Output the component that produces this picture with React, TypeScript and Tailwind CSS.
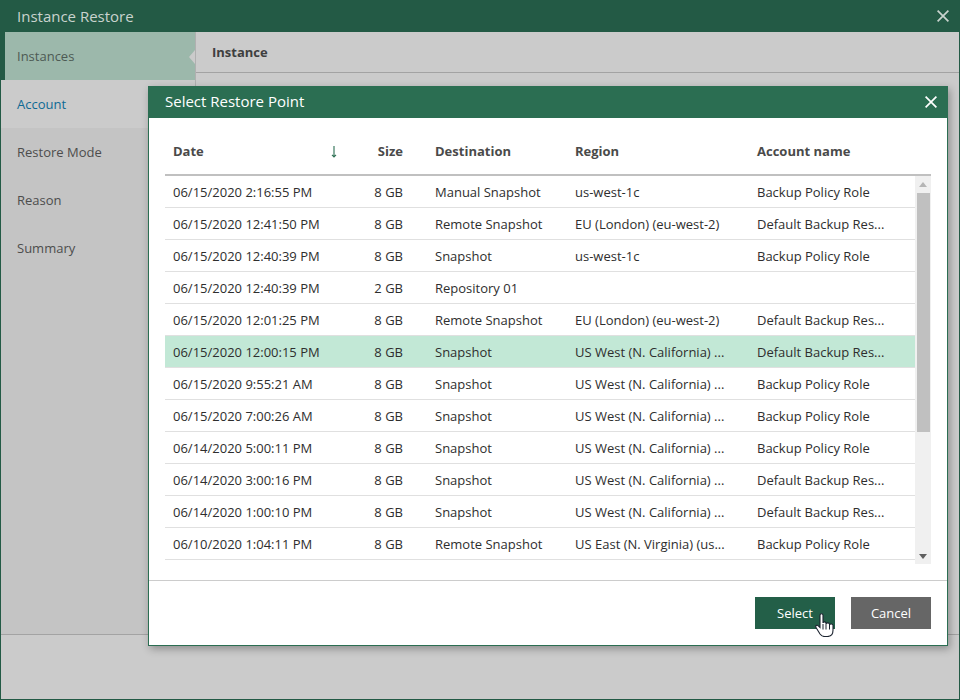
const ROWS = [
  ['06/15/2020 2:16:55 PM', '8 GB', 'Manual Snapshot', 'us-west-1c', 'Backup Policy Role'],
  ['06/15/2020 12:41:50 PM', '8 GB', 'Remote Snapshot', 'EU (London) (eu-west-2)', 'Default Backup Res...'],
  ['06/15/2020 12:40:39 PM', '8 GB', 'Snapshot', 'us-west-1c', 'Backup Policy Role'],
  ['06/15/2020 12:40:39 PM', '2 GB', 'Repository 01', '', ''],
  ['06/15/2020 12:01:25 PM', '8 GB', 'Remote Snapshot', 'EU (London) (eu-west-2)', 'Default Backup Res...'],
  ['06/15/2020 12:00:15 PM', '8 GB', 'Snapshot', 'US West (N. California) ...', 'Default Backup Res...'],
  ['06/15/2020 9:55:21 AM', '8 GB', 'Snapshot', 'US West (N. California) ...', 'Backup Policy Role'],
  ['06/15/2020 7:00:26 AM', '8 GB', 'Snapshot', 'US West (N. California) ...', 'Backup Policy Role'],
  ['06/14/2020 5:00:11 PM', '8 GB', 'Snapshot', 'US West (N. California) ...', 'Backup Policy Role'],
  ['06/14/2020 3:00:16 PM', '8 GB', 'Snapshot', 'US West (N. California) ...', 'Default Backup Res...'],
  ['06/14/2020 1:00:10 PM', '8 GB', 'Snapshot', 'US West (N. California) ...', 'Default Backup Res...'],
  ['06/10/2020 1:04:11 PM', '8 GB', 'Remote Snapshot', 'US East (N. Virginia) (us...', 'Backup Policy Role'],
];

const COLS = 'grid grid-cols-[195px_51px_156px_182px_166px] items-center';

function CloseIcon({ className }: { className: string }) {
  return (
    <svg viewBox="0 0 12 12" className={className} fill="none" stroke="currentColor" strokeWidth="1.7">
      <path d="M0.6 0.6 11.4 11.4M11.4 0.6 0.6 11.4" />
    </svg>
  );
}

function HandCursor() {
  return (
    <svg viewBox="0 0 19 24" className="absolute left-[60px] top-[16px] h-6 w-[19px]">
      <path
        d="M5 2.200c0-2 3-2 3 0v7.800c0-1.500 3-1.500 3 0v1c0-1.500 3.500-1.500 3.500 0v1c0-1.300 3.500-1.300 3.500.3v5c0 4-2.400 6.200-5.600 6.200H9.500c-2.500 0-3.500-1-4.500-2.500L1 14.500c-1-1.700 1-3 2.300-1.700L5 14.500z"
        fill="#fff"
        stroke="#1c2430"
        strokeWidth="1.100"
      />
      <path d="M8 11v5.500M11 11v5.500M14.500 12v4.500" stroke="#1c2430" strokeWidth="1" fill="none" />
    </svg>
  );
}

export default function App() {
  return (
    <div className="relative flex h-[700px] w-[960px] flex-col overflow-hidden border-x border-b border-[#235a45] bg-[#cbcbcb] font-['Open_Sans',sans-serif] text-[13px] text-[#4d4d4d]">
      <div className="flex h-8 shrink-0 items-center justify-between bg-[#235a45] pl-4 pr-[10px] text-[15px] text-[#c9d3ce]">
        <span>Instance Restore</span>
        <CloseIcon className="h-3 w-3 text-[#c9d3ce]" />
      </div>

      <div className="flex flex-1">
        <div className="flex w-[195px] shrink-0 flex-col border-r border-[#b0b0b0]">
          <div className="relative flex h-12 items-center border-l-4 border-[#235a45] bg-[#9cb8ab] pl-3 pt-0.5 text-[#4d5a54]">
            Instances
            <div className="absolute right-0 top-[18px] h-0 w-0 border-y-[7px] border-r-[6px] border-y-transparent border-r-[#cbcbcb]" />
          </div>
          <div className="flex h-12 items-center bg-[#cbcbcb] pl-4 pt-0.5 text-[#0f6a94]">Account</div>
          <div className="flex-1 bg-[#c4c4c4]">
            {['Restore Mode', 'Reason', 'Summary'].map((s) => (
              <div key={s} className="flex h-12 items-center pl-4 pt-0.5">
                {s}
              </div>
            ))}
          </div>
        </div>
        <div className="flex-1">
          <div className="flex h-[41px] items-center border-b border-[#a3a3a3] pl-4 pt-0.5 font-bold text-[#3f3f3f]">Instance</div>
        </div>
      </div>

      <div className="h-[65px] shrink-0 border-t border-[#a3a3a3] bg-[#cbcbcb]" />

      {/* restore point dialog */}
      <div className="absolute left-[147px] top-[86px] flex h-[560px] w-[800px] flex-col border border-[#2b6e52] bg-white shadow-[2px_3px_8px_rgba(0,0,0,0.3)]">
        <div className="flex h-[31px] shrink-0 items-center justify-between bg-[#2b6e52] pb-0.5 pl-4 pr-[10px] text-[15px] text-white">
          <span>Select Restore Point</span>
          <CloseIcon className="h-3 w-3 text-white" />
        </div>

        <div className="flex-1 px-4">
          <div className={`${COLS} h-[58px] border-b-2 border-[#c0c0c0] pt-3 font-bold text-[#4a4a4a]`}>
            <div className="relative pl-2">
              Date
              <svg viewBox="0 0 8 14" className="absolute left-[165px] top-[3px] h-[14px] w-2 text-[#2b6e52]" fill="none" stroke="currentColor" strokeWidth="1.100">
                <path d="M4 1v11M2 9.800 4 12l2-2.200" />
              </svg>
            </div>
            <div className="pr-2 text-right">Size</div>
            <div className="pl-6">Destination</div>
            <div className="pl-2">Region</div>
            <div className="pl-2">Account name</div>
          </div>

          <div className="flex h-[388px]">
            <div className="w-[750px]">
              {ROWS.map((r, i) => (
                <div key={i} className={`${COLS} h-8 border-b border-[#e0e0e0] pt-0.5 text-[#2e2e2e] ${i === 5 ? 'bg-[#c2e8d6]' : ''}`}>
                  <div className="pl-2">{r[0]}</div>
                  <div className="pr-2 text-right">{r[1]}</div>
                  <div className="pl-6">{r[2]}</div>
                  <div className="pl-2">{r[3]}</div>
                  <div className="pl-2">{r[4]}</div>
                </div>
              ))}
            </div>
            <div className="flex w-4 flex-col items-center bg-[#f0f0f0]">
              <div className="flex h-[17px] shrink-0 items-center justify-center">
                <div className="h-0 w-0 border-x-4 border-b-[5px] border-x-transparent border-b-[#b5b5b5]" />
              </div>
              <div className="h-[239px] w-[13px] bg-[#c0c0c0]" />
              <div className="flex-1" />
              <div className="flex h-4 shrink-0 items-center justify-center">
                <div className="h-0 w-0 border-x-4 border-t-[5px] border-x-transparent border-t-[#5f5f5f]" />
              </div>
            </div>
          </div>
        </div>

        <div className="flex h-[65px] shrink-0 items-center justify-end gap-4 border-t border-[#cccccc] pr-4">
          <div className="relative flex h-8 w-20 items-center justify-center bg-[#235f48] pt-0.5 text-white">
            Select
            <HandCursor />
          </div>
          <div className="flex h-8 w-20 items-center justify-center bg-[#666666] pt-0.5 text-white">Cancel</div>
        </div>
      </div>
    </div>
  );
}
